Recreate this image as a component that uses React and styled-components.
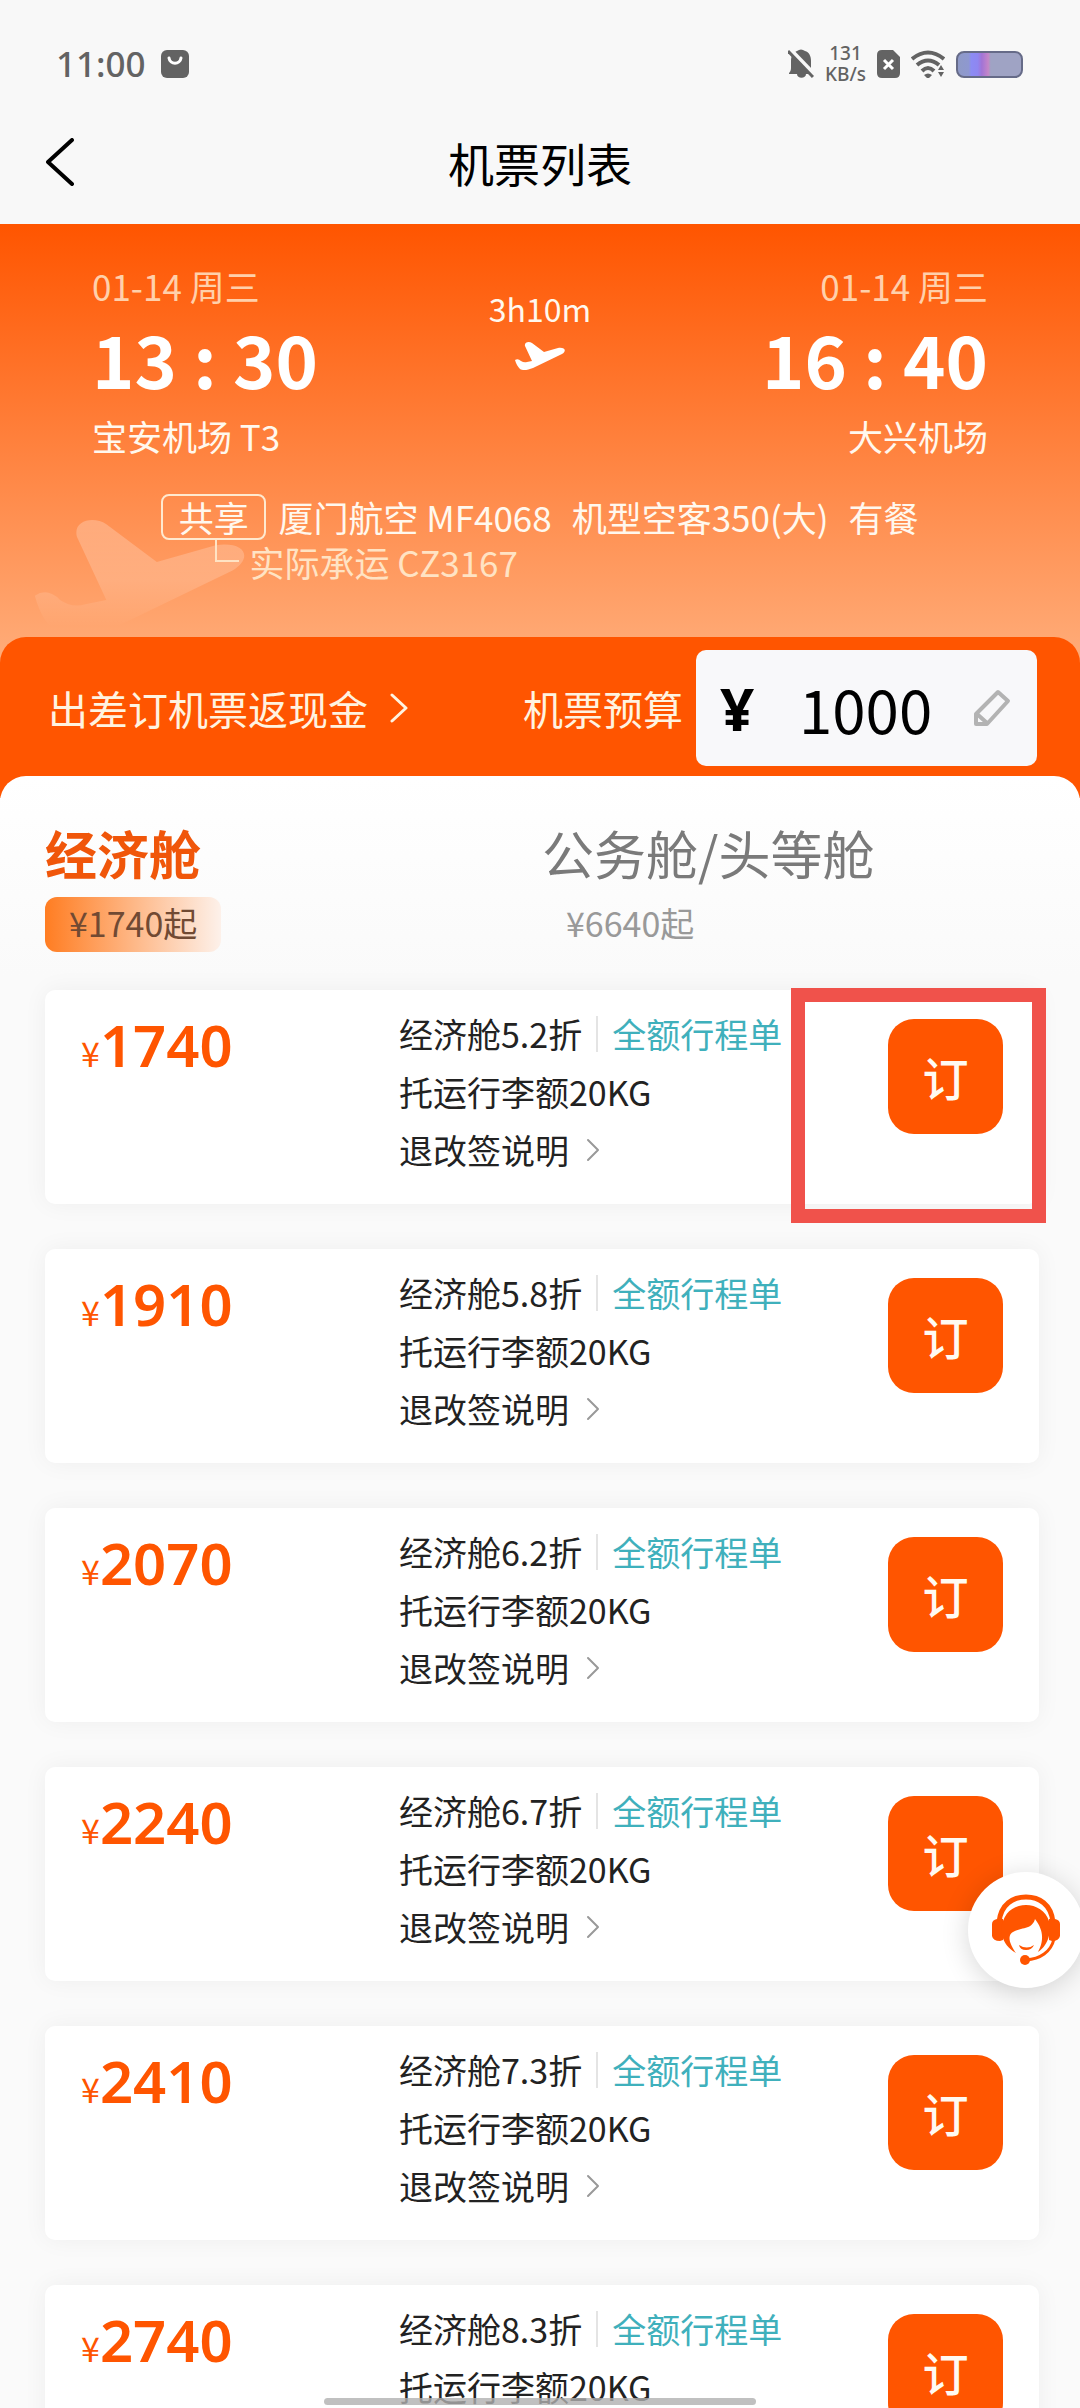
import React, { useState } from 'react'
import styled, { createGlobalStyle } from 'styled-components'

const orange = '#ff5500'
const teal = '#3fb0bc'
const cjk = `"Noto Sans CJK SC", sans-serif`
const latin = `"Noto Sans", "Noto Sans CJK SC", sans-serif`

const GlobalStyle = createGlobalStyle`
	* {
		box-sizing: border-box;
	}

	body {
		margin: 0;
		background: #fafafa;
		font-family: ${cjk};
		color: #222;
	}

	button, input {
		font-family: inherit;
		padding: 0;
		border: 0;
		background: none;
		color: inherit;
	}

	a {
		text-decoration: none;
	}
`

const Page = styled.div`
	height: 100vh;
	display: flex;
	flex-direction: column;
	overflow: hidden;
`

const StatusBar = styled.div`
	display: flex;
	align-items: center;
	justify-content: space-between;
	height: 128px;
	padding: 0 57px 0 56px;
	flex: none;
	background: #f8f8f8;
	color: #636363;
`

const StatusGroup = styled.div`
	display: flex;
	align-items: center;
	gap: ${props => props.gap}px;
`

const Clock = styled.span`
	font: 500 35px/40px ${latin};
`

const Speed = styled.span`
	display: flex;
	flex-direction: column;
	align-items: center;
	font: 500 19px/21px ${latin};
`

const TitleBar = styled.header`
	display: grid;
	grid-template-columns: 80px 1fr 80px;
	align-items: center;
	height: 96px;
	padding: 0 20px 28px;
	flex: none;
	background: #f8f8f8;
`

const BackButton = styled.button`
	display: flex;
	justify-content: center;
`

const Title = styled.h1`
	margin: 0;
	font-size: 46px;
	font-weight: 400;
	line-height: 64px;
	text-align: center;
	color: #000;
`

const Hero = styled.section`
	position: relative;
	flex: none;
	padding: 36px 92px 79px;
	background: linear-gradient(${orange}, #ffad7a);
	color: #fff8ee;
`

const GhostPlane = styled.svg`
	position: absolute;
	left: 34px;
	top: 296px;
`

const Route = styled.div`
	display: flex;
	justify-content: space-between;
`

const Stop = styled.div`
	text-align: ${props => props.align};
`

const StopDate = styled.div`
	font-size: 35px;
	line-height: 52px;
	color: #ffd0ab;
`

const StopTime = styled.div`
	margin-bottom: 8px;
	font-size: 72px;
	font-weight: 700;
	line-height: 92px;
	color: #fff;
`

const StopName = styled.div`
	font-size: 35px;
	line-height: 48px;
`

const Duration = styled.div`
	display: flex;
	flex-direction: column;
	align-items: center;
	gap: 10px;
	padding-top: 24px;
	font-size: 32px;
	line-height: 48px;
`

const FlightInfo = styled.div`
	position: relative;
	display: flex;
	flex-direction: column;
	width: max-content;
	margin: 34px auto 0;
	font-size: 35px;
	line-height: 46px;
`

const InfoRow = styled.div`
	display: flex;
	align-items: center;
	gap: 20px;
`

const Flight = styled.span`
	display: flex;
	gap: 12px;
`

const ShareTag = styled.span`
	width: 105px;
	height: 46px;
	border: 2px solid #ffe9cf;
	border-radius: 8px;
	line-height: 42px;
	text-align: center;
`

const Carrier = styled.div`
	display: flex;
	gap: 10px;
	padding-left: 54px;
	line-height: 44px;
	color: #ffe3c4;
`

const Elbow = styled.span`
	width: 24px;
	height: 22px;
	border-left: 2px solid #ffe3c4;
	border-bottom: 2px solid #ffe3c4;
`

const PromoBar = styled.section`
	position: relative;
	display: flex;
	align-items: center;
	justify-content: space-between;
	flex: none;
	margin-top: -26px;
	padding: 13px 43px 32px 48px;
	border-radius: 26px 26px 0 0;
	background: ${orange};
	color: #fff3e0;
	font-size: 40px;
	line-height: 56px;
`

const PromoLink = styled.a`
	display: flex;
	align-items: center;
	gap: 22px;
	color: inherit;
`

const Budget = styled.label`
	display: flex;
	align-items: center;
	gap: 13px;
`

const BudgetBox = styled.span`
	display: flex;
	align-items: center;
	width: 341px;
	height: 116px;
	padding: 0 26px 0 24px;
	border-radius: 10px;
	background: #f8f8fa;
	color: #000;
`

const Currency = styled.span`
	flex: none;
	width: 79px;
	font: 700 60px/80px ${latin};
`

const BudgetInput = styled.input`
	flex: 1;
	min-width: 0;
	height: 80px;
	font-size: 60px;
	line-height: 80px;
	outline: none;
`

const Panel = styled.main`
	position: relative;
	flex: 1;
	min-height: 0;
	margin-top: -22px;
	padding: 40px 41px 0 45px;
	border-radius: 26px 26px 0 0;
	background: linear-gradient(#fff, #fafafa 200px);
`

const Tabs = styled.div`
	display: grid;
	grid-template-columns: 1fr 1fr;
	margin-bottom: 38px;
`

const Tab = styled.button`
	display: flex;
	flex-direction: column;
	align-items: flex-start;
	gap: 7px;
	font-size: 52px;
	line-height: 74px;
	font-weight: ${props => (props.$active ? 700 : 400)};
	color: ${props => (props.$active ? '#f0560a' : '#7a7a7a')};
`

const FromPrice = styled.span`
	height: 55px;
	padding: 0 24px;
	border-radius: 12px;
	background: ${props => (props.$active ? 'linear-gradient(90deg, #ff7d22, #fdf1ea)' : 'none')};
	color: ${props => (props.$active ? '#714a33' : '#999')};
	font-size: 34px;
	font-weight: 400;
	line-height: 52px;
`

const FareList = styled.ul`
	display: flex;
	flex-direction: column;
	gap: 45px;
	margin: 0;
	padding: 0;
	list-style: none;
`

const Card = styled.li`
	position: relative;
	display: grid;
	grid-template-columns: 318fr 489fr 115px;
	align-items: start;
	padding: 15px 36px 25px;
	border-radius: 10px;
	background: #fff;
	box-shadow: 0 0 24px rgba(0, 0, 0, 0.05);
`

const Price = styled.div`
	display: flex;
	align-items: baseline;
	font: 600 58px/80px ${latin};
	color: ${orange};

	small {
		font: 400 34px/80px ${cjk};
	}
`

const Details = styled.div`
	font-size: 34px;
	line-height: 58px;
	white-space: nowrap;
`

const CabinRow = styled.div`
	display: flex;
	align-items: center;
`

const Divider = styled.span`
	width: 2px;
	height: 36px;
	margin: 0 14px;
	background: #e4e4e4;
`

const ReceiptLink = styled.a`
	color: ${teal};
`

const RulesButton = styled.button`
	display: flex;
	align-items: center;
	gap: 17px;
	font-size: 34px;
	line-height: 58px;
`

const BookButton = styled.button`
	width: 115px;
	height: 115px;
	margin-top: 14px;
	border-radius: 26px;
	background: ${orange};
	color: #fffaf2;
	font-size: 46px;
	font-weight: 500;
	line-height: 115px;
`

const Highlight = styled.span`
	position: absolute;
	top: -2px;
	right: -7px;
	width: 255px;
	height: 235px;
	border: 14px solid #f0524b;
	pointer-events: none;
`

const Service = styled.button`
	position: fixed;
	right: -4px;
	bottom: 420px;
	display: flex;
	align-items: center;
	justify-content: center;
	width: 116px;
	height: 116px;
	border-radius: 50%;
	background: #fff;
	box-shadow: 0 4px 28px rgba(0, 0, 0, 0.16);
`

const HomeIndicator = styled.div`
	position: fixed;
	bottom: 3px;
	left: 30%;
	right: 30%;
	height: 7px;
	border-radius: 4px;
	background: rgba(176, 176, 176, 0.8);
`

const planePath = 'M0 18q3-2 6 1 3 2 6 1l5-1L10 4c-1-4 4-5 7-3l12 9 14-4c7-1 9 3 4 6L18 26c-5 2-10 3-13 1-2-2-4-5-5-9z'

const fares = [
	{ price: 1740, discount: '5.2', marked: true },
	{ price: 1910, discount: '5.8' },
	{ price: 2070, discount: '6.2' },
	{ price: 2240, discount: '6.7' },
	{ price: 2410, discount: '7.3' },
	{ price: 2740, discount: '8.3' }
]

const Chevron = ({ width, height, color, stroke }) => (
	<svg width={width} height={height} viewBox={`0 0 ${width} ${height}`} fill="none" stroke={color} strokeWidth={stroke} strokeLinecap="round" strokeLinejoin="round">
		<path d={`M2 2L${width - 2} ${height / 2}L2 ${height - 2}`} />
	</svg>
)

const StatusIcons = () => (
	<StatusGroup gap={11}>
		<svg width="26" height="30" viewBox="0 0 26 30">
			<path d="M1 25c0-2 2-2 2-6v-7C3 6 6 3 9 2q4-3 8 0c4 1 6 5 6 10v7c0 4 2 4 2 6h-7c0 5-9 5-9 0z" fill="#636363" />
			<path d="M2 0L27 26" stroke="#f8f8f8" strokeWidth="4" />
			<path d="M0 2L25 28" stroke="#636363" strokeWidth="3" />
		</svg>
		<Speed>
			<span>131</span>
			<span>KB/s</span>
		</Speed>
		<svg width="23" height="28" viewBox="0 0 23 28">
			<path d="M5 0h11l7 7v16q0 5-5 5H5q-5 0-5-5V5q0-5 5-5z" fill="#636363" />
			<path d="M7 10l9 9M16 10l-9 9" stroke="#fff" strokeWidth="3" />
		</svg>
		<svg width="34" height="28" viewBox="0 0 34 28" fill="none" stroke="#636363" strokeWidth="4">
			<path d="M1 9Q17-4 33 9M6 15Q17 6 28 15M11 21Q17 15 23 21" />
			<path d="M13 25q4-3 8 0l-4 4zM27 20l3-5 3 5zM27 22l3 5 3-5z" fill="#636363" stroke="none" />
		</svg>
		<svg width="67" height="27" viewBox="0 0 67 27">
			<defs>
				<linearGradient id="charge">
					<stop offset="0" stopColor="#8f9ac6" />
					<stop offset="0.18" stopColor="#8e98d0" />
					<stop offset="0.22" stopColor="#8c8bf4" />
					<stop offset="0.32" stopColor="#8f86f0" />
					<stop offset="0.38" stopColor="#a274d6" />
					<stop offset="0.48" stopColor="#c486c8" />
					<stop offset="0.52" stopColor="#9fa3c4" />
					<stop offset="1" stopColor="#9fa3c4" />
				</linearGradient>
			</defs>
			<rect x="1" y="1" width="65" height="25" rx="7" fill="url(#charge)" stroke="#666b88" strokeWidth="2" />
		</svg>
	</StatusGroup>
)

const Agent = () => (
	<svg width="68" height="72" viewBox="0 0 68 72">
		<path d="M7 28C9 10 21 3 34 3s25 7 27 25" fill="none" stroke={orange} strokeWidth="5" />
		<path d="M5 25q-5 1-5 5v12q1 5 8 5l3-1V25zM63 25q5 1 5 5v12q-1 5-8 5l-3-1V25z" fill={orange} />
		<path d="M24 59C8 50 8 34 11 27 15 16 24 11 34 11s20 6 23 16c2 9 1 23-11 31 5-9 7-20-3-33-3 11-14 8-22 13-7 4-2 14 3 21z" fill={orange} />
		<path d="M27 51q8 5 15 0-2 5-8 5t-7-5z" fill={orange} />
		<path d="M62 45C59 58 48 65 34 66" fill="none" stroke={orange} strokeWidth="3" />
		<circle cx="33" cy="66" r="5" fill={orange} />
	</svg>
)

const Fare = ({ price, discount, marked }) => (
	<Card>
		<Price><small>¥</small>{price}</Price>
		<Details>
			<CabinRow>
				经济舱{discount}折
				<Divider />
				<ReceiptLink href="#receipt">全额行程单</ReceiptLink>
			</CabinRow>
			<div>托运行李额20KG</div>
			<RulesButton>
				退改签说明
				<Chevron width={14} height={24} color="#999" stroke={2} />
			</RulesButton>
		</Details>
		<BookButton>订</BookButton>
		{marked && <Highlight />}
	</Card>
)

const App = () => {
	const [budget, setBudget] = useState('1000')
	const [cabin, setCabin] = useState('economy')

	return (
		<Page>
			<GlobalStyle />

			<StatusBar>
				<StatusGroup gap={15}>
					<Clock>11:00</Clock>
					<svg width="28" height="28" viewBox="0 0 28 28">
						<rect width="28" height="28" rx="6" fill="#636363" />
						<path d="M8 8c1 7 11 7 12 0" fill="none" stroke="#fff" strokeWidth="3" strokeLinecap="round" />
					</svg>
				</StatusGroup>
				<StatusIcons />
			</StatusBar>

			<TitleBar>
				<BackButton aria-label="返回">
					<svg width="28" height="48" viewBox="0 0 28 48" fill="none" stroke="#000" strokeWidth="4" strokeLinecap="round" strokeLinejoin="round">
						<path d="M26 2L2 24L26 46" />
					</svg>
				</BackButton>
				<Title>机票列表</Title>
			</TitleBar>

			<Hero>
				<GhostPlane width="212" height="122" viewBox="0 0 50 29">
					<defs>
						<linearGradient id="ghost" x1="0" y1="0" x2="0" y2="1">
							<stop offset="0" stopColor="#fff" stopOpacity="0.24" />
							<stop offset="0.5" stopColor="#fff" stopOpacity="0.18" />
							<stop offset="0.9" stopColor="#fff" stopOpacity="0" />
						</linearGradient>
					</defs>
					<path d={planePath} fill="url(#ghost)" />
				</GhostPlane>
				<Route>
					<Stop align="left">
						<StopDate>01-14 周三</StopDate>
						<StopTime>13 : 30</StopTime>
						<StopName>宝安机场 T3</StopName>
					</Stop>
					<Duration>
						3h10m
						<svg width="50" height="29" viewBox="0 0 50 29">
							<path d={planePath} fill="#fff" />
						</svg>
					</Duration>
					<Stop align="right">
						<StopDate>01-14 周三</StopDate>
						<StopTime>16 : 40</StopTime>
						<StopName>大兴机场</StopName>
					</Stop>
				</Route>
				<FlightInfo>
					<InfoRow>
						<Flight>
							<ShareTag>共享</ShareTag>
							厦门航空 MF4068
						</Flight>
						<span>机型空客350(大)</span>
						<span>有餐</span>
					</InfoRow>
					<Carrier>
						<Elbow />
						实际承运 CZ3167
					</Carrier>
				</FlightInfo>
			</Hero>

			<PromoBar>
				<PromoLink href="#cashback">
					出差订机票返现金
					<Chevron width={18} height={30} color="#fff3e0" stroke={3} />
				</PromoLink>
				<Budget>
					机票预算
					<BudgetBox>
						<Currency>¥</Currency>
						<BudgetInput value={budget} onChange={e => setBudget(e.target.value)} inputMode="numeric" />
						<svg width="38" height="38" viewBox="0 0 38 38" fill="none" stroke="#b3b3b3" strokeWidth="4" strokeLinejoin="round">
							<path d="M3 35V25L25 3l10 9-21 23zM4 25l10 9" />
						</svg>
					</BudgetBox>
				</Budget>
			</PromoBar>

			<Panel>
				<Tabs role="tablist">
					<Tab role="tab" aria-selected={cabin === 'economy'} $active={cabin === 'economy'} onClick={() => setCabin('economy')}>
						经济舱
						<FromPrice $active={cabin === 'economy'}>¥1740起</FromPrice>
					</Tab>
					<Tab role="tab" aria-selected={cabin === 'business'} $active={cabin === 'business'} onClick={() => setCabin('business')}>
						公务舱/头等舱
						<FromPrice $active={cabin === 'business'}>¥6640起</FromPrice>
					</Tab>
				</Tabs>
				<FareList>
					{fares.map(fare => <Fare key={fare.price} {...fare} />)}
				</FareList>
			</Panel>

			<Service aria-label="在线客服"><Agent /></Service>
			<HomeIndicator />
		</Page>
	)
}

export default App
